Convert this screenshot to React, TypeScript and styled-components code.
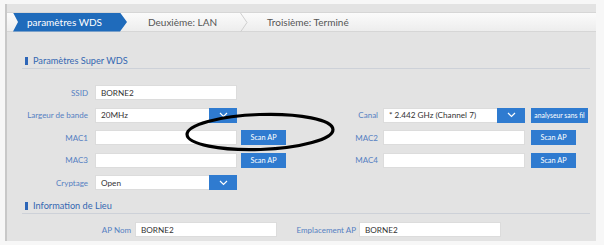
import React from 'react';
import styled, { createGlobalStyle } from 'styled-components';

const GlobalStyle = createGlobalStyle`
  html, body {
    margin: 0;
    padding: 0;
    background: #ffffff;
  }
  body {
    font-family: Lato, "Open Sans", Arial, sans-serif;
    width: 604px;
    height: 245px;
    overflow: hidden;
  }
`;

const Page = styled.div`
  position: relative;
  width: 604px;
  height: 245px;
  padding-top: 4px;
  box-sizing: border-box;
  background: #f7f7f7;
`;

const Panel = styled.div`
  margin-left: 5px;
  width: 591px;
  height: 237px;
  box-sizing: border-box;
  background: #e3e3e3;
  border-left: 2px solid #c8c8c8;
  padding-top: 8px;
`;

const TabBar = styled.div`
  display: flex;
  align-items: center;
  height: 20px;
  box-sizing: border-box;
  padding-left: 6px;
  background: linear-gradient(#fbfbfb, #ededed);
  border-top: 1px solid #d6d6d6;
  border-bottom: 1px solid #d6d6d6;
  font-size: 10px;
`;

const ActiveTab = styled.div`
  width: 114px;
  height: 19px;
  display: flex;
  align-items: center;
  padding-left: 14px;
  box-sizing: border-box;
  background: #1f6bbb;
  color: #ffffff;
  clip-path: polygon(0 0, calc(100% - 7px) 0, 100% 50%, calc(100% - 7px) 100%, 0 100%, 5px 50%);
`;

const Tab = styled.div<{ $w: number; $pad: number }>`
  width: ${p => p.$w}px;
  padding-left: ${p => p.$pad}px;
  box-sizing: border-box;
  color: #555;
  white-space: nowrap;
`;

const Sep = styled.svg`
  display: block;
  flex: none;
`;

const Content = styled.div`
  padding: 0 6px 0 15px;
`;

const SectionHead = styled.div<{ $top: number }>`
  margin-top: ${p => p.$top}px;
  height: 15px;
  display: flex;
  align-items: center;
  padding-left: 3px;
  border-bottom: 1px solid #cdd1d8;
  color: #3568b2;
  font-size: 9.2px;
`;

const Bar = styled.span`
  width: 3px;
  height: 8px;
  background: #2d66b8;
  margin-right: 5px;
`;

const FormGrid = styled.div`
  margin-top: 16px;
  display: grid;
  grid-template-columns: 73px 191px 97px 1fr;
  grid-auto-rows: 15px;
  row-gap: 7.5px;
`;

const Label = styled.div<{ $pad?: number }>`
  display: flex;
  align-items: center;
  justify-content: flex-end;
  padding-right: ${p => p.$pad ?? 7}px;
  color: #5580c2;
  font-size: 8px;
  white-space: nowrap;
`;

const Controls = styled.div<{ $gap?: number }>`
  display: flex;
  gap: ${p => p.$gap ?? 4}px;
  height: 15px;
`;

const Input = styled.div<{ $w?: number }>`
  width: ${p => p.$w ?? 142}px;
  height: 15px;
  box-sizing: border-box;
  background: #ffffff;
  border: 1px solid #dcdcdc;
  display: flex;
  align-items: center;
  padding-left: 5px;
  color: #333;
  font-size: 8.2px;
  white-space: nowrap;
`;

const SelectWrap = styled.div`
  display: flex;
  width: 142px;
  height: 15px;
`;

const SelectBox = styled(Input)`
  width: 114px;
  border-right: none;
`;

const DropBtn = styled.div`
  width: 28px;
  height: 15px;
  background: #2f7bd0;
  display: flex;
  align-items: center;
  justify-content: center;
`;

const Button = styled.div<{ $w?: number; $size?: number }>`
  width: ${p => p.$w ?? 45}px;
  height: 15px;
  background: #2f7bd0;
  color: #ffffff;
  font-size: ${p => p.$size ?? 7.3}px;
  display: flex;
  align-items: center;
  justify-content: center;
  white-space: nowrap;
`;

const PlaceRow = styled.div`
  margin-top: 8px;
  display: flex;
  height: 15px;
`;

const PlaceLabel = styled(Label)<{ $w: number }>`
  width: ${p => p.$w}px;
  box-sizing: border-box;
`;

const Overlay = styled.svg`
  position: absolute;
  left: 182px;
  top: 109px;
  pointer-events: none;
`;

const Chevron = () => (
  <svg width="9" height="6" viewBox="0 0 9 6">
    <path d="M1 1 L4.5 4.5 L8 1" stroke="#fff" strokeWidth="1.2" fill="none" />
  </svg>
);

const Select: React.FC<{ value: string }> = ({ value }) => (
  <SelectWrap>
    <SelectBox>{value}</SelectBox>
    <DropBtn>
      <Chevron />
    </DropBtn>
  </SelectWrap>
);

export default function App() {
  return (
    <Page>
      <GlobalStyle />
      <Panel>
        <TabBar>
          <ActiveTab>paramètres WDS</ActiveTab>
          <Tab $w={113} $pad={21}>Deuxième: LAN</Tab>
          <Sep width="8" height="19" viewBox="0 0 8 19">
            <path d="M0.5 0 L7 9.5 L0.5 19" stroke="#cfcfcf" strokeWidth="1" fill="none" />
          </Sep>
          <Tab $w={200} $pad={19}>Troisième: Terminé</Tab>
        </TabBar>

        <Content>
          <SectionHead $top={21}>
            <Bar />
            Paramètres Super WDS
          </SectionHead>

          <FormGrid>
            <Label>SSID</Label>
            <Controls>
              <Input>BORNE2</Input>
            </Controls>
            <div />
            <div />

            <Label>Largeur de bande</Label>
            <Controls>
              <Select value="20MHz" />
            </Controls>
            <Label $pad={5}>Canal</Label>
            <Controls $gap={6}>
              <Select value="* 2.442 GHz (Channel 7)" />
              <Button $w={57} $size={6.8}>analyseur sans fil</Button>
            </Controls>

            <Label>MAC1</Label>
            <Controls>
              <Input />
              <Button>Scan AP</Button>
            </Controls>
            <Label $pad={5}>MAC2</Label>
            <Controls $gap={6}>
              <Input />
              <Button>Scan AP</Button>
            </Controls>

            <Label>MAC3</Label>
            <Controls>
              <Input />
              <Button>Scan AP</Button>
            </Controls>
            <Label $pad={5}>MAC4</Label>
            <Controls $gap={6}>
              <Input />
              <Button>Scan AP</Button>
            </Controls>

            <Label>Cryptage</Label>
            <Controls>
              <Select value="Open" />
            </Controls>
          </FormGrid>

          <SectionHead $top={8}>
            <Bar />
            Information de Lieu
          </SectionHead>

          <PlaceRow>
            <PlaceLabel $w={113} $pad={4}>AP Nom</PlaceLabel>
            <Input>BORNE2</Input>
            <PlaceLabel $w={82} $pad={3}>Emplacement AP</PlaceLabel>
            <Input>BORNE2</Input>
          </PlaceRow>
        </Content>
      </Panel>

      <Overlay width="156" height="46" viewBox="0 0 156 46">
        <ellipse cx="78" cy="23" rx="73" ry="17.5" fill="none" stroke="#000" strokeWidth="3.2" transform="rotate(-2 78 23)" />
      </Overlay>
    </Page>
  );
}
